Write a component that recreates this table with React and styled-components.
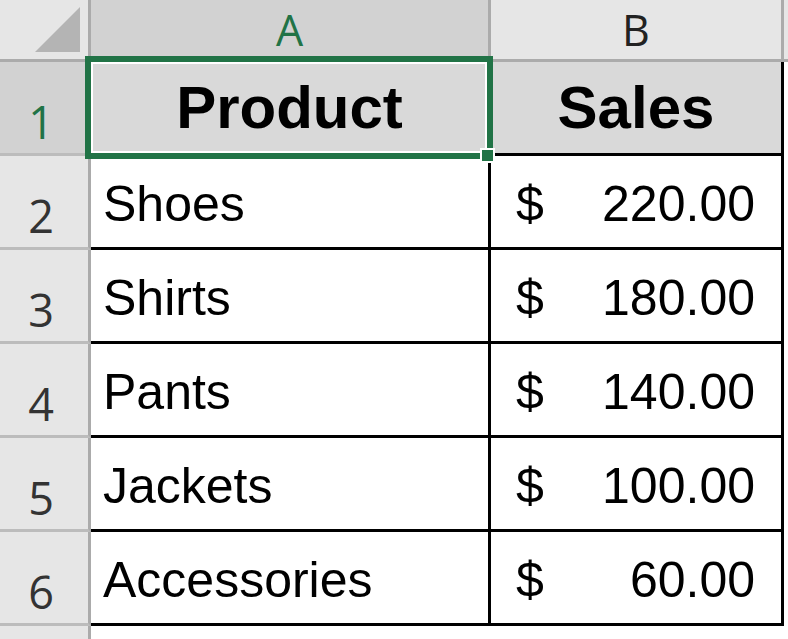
import React from 'react'
import styled, { createGlobalStyle } from 'styled-components'

const rows = [
    { product: 'Shoes', sales: '220.00' },
    { product: 'Shirts', sales: '180.00' },
    { product: 'Pants', sales: '140.00' },
    { product: 'Jackets', sales: '100.00' },
    { product: 'Accessories', sales: '60.00' },
]

function App() {
    return (
        <>
            <GlobalStyle />
            <Sheet>
                <Corner>
                    <Triangle />
                </Corner>
                <ColHeader $selected>A</ColHeader>
                <ColHeader>B</ColHeader>
                <ColHeader $filler />

                <RowHeader $selected>1</RowHeader>
                <Cell $head>
                    Product
                    <Selection>
                        <Handle />
                    </Selection>
                </Cell>
                <Cell $head>Sales</Cell>
                <Blank />

                {rows.map((row, i) => (
                    <React.Fragment key={row.product}>
                        <RowHeader>{i + 2}</RowHeader>
                        <Cell>{row.product}</Cell>
                        <Cell $money>
                            <span>$</span>
                            <span>{row.sales}</span>
                        </Cell>
                        <Blank />
                    </React.Fragment>
                ))}

                <RowHeader $last />
                <Blank />
                <Blank />
                <Blank />
            </Sheet>
        </>
    )
}

export default App

const GlobalStyle = createGlobalStyle`
    html, body {
        margin: 0;
        padding: 0;
        background: #ffffff;
        overflow: hidden;
    }
`

const Sheet = styled.div`
    display: grid;
    grid-template-columns: 91px 400px 293px 1fr;
    grid-template-rows: 62px repeat(6, 94px) 1fr;
    width: 100vw;
    height: 100vh;
    font-family: "Liberation Sans", Arial, sans-serif;
    color: #000;
`

const Corner = styled.div`
    position: relative;
    background: #e6e6e6;
    border-right: 3px solid #ababab;
    border-bottom: 3px solid #ababab;
`

const Triangle = styled.div`
    position: absolute;
    left: 35px;
    top: 7px;
    width: 45px;
    height: 45px;
    background: #b4b4b4;
    clip-path: polygon(100% 0, 100% 100%, 0 100%);
`

const ColHeader = styled.div`
    display: flex;
    align-items: center;
    justify-content: center;
    background: ${p => (p.$selected ? '#d2d2d2' : '#e6e6e6')};
    color: ${p => (p.$selected ? '#217346' : '#222')};
    border-right: ${p => (p.$filler ? 'none' : '3px solid #ababab')};
    border-bottom: 3px solid #ababab;
    font-family: "Open Sans", "Liberation Sans", sans-serif;
    font-size: 43px;
    line-height: 1;
`

const RowHeader = styled.div`
    display: flex;
    align-items: flex-end;
    justify-content: center;
    padding: 0 6px 9px 0;
    background: ${p => (p.$selected ? '#d2d2d2' : '#e6e6e6')};
    color: ${p => (p.$selected ? '#217346' : '#333')};
    border-right: 3px solid #ababab;
    border-bottom: ${p => (p.$last ? 'none' : '3px solid #bcbcbc')};
    font-family: "Open Sans", "Liberation Sans", sans-serif;
    font-size: 45px;
    line-height: 1;
`

const Cell = styled.div`
    position: relative;
    display: flex;
    align-items: center;
    justify-content: ${p => (p.$head ? 'center' : p.$money ? 'space-between' : 'flex-start')};
    padding: ${p => (p.$money ? '4px 26px 0 25px' : p.$head ? '1px 0 0' : '4px 12px 0')};
    background: ${p => (p.$head ? '#d9d9d9' : '#ffffff')};
    border-right: 3px solid #000;
    border-bottom: 3px solid #000;
    font-size: ${p => (p.$head ? '60px' : '50px')};
    font-weight: ${p => (p.$head ? 700 : 400)};
    line-height: 1;
    white-space: nowrap;
`

const Blank = styled.div`
    background: #ffffff;
`

const Selection = styled.div`
    position: absolute;
    left: -6px;
    top: -6px;
    right: -5px;
    bottom: -6px;
    border: 6px solid #217346;
    box-shadow: inset 0 0 0 2px #ffffff;
    z-index: 2;
    pointer-events: none;
`

const Handle = styled.div`
    position: absolute;
    right: -8px;
    bottom: -10px;
    width: 11px;
    height: 11px;
    background: #217346;
    border: 2px solid #ffffff;
`
